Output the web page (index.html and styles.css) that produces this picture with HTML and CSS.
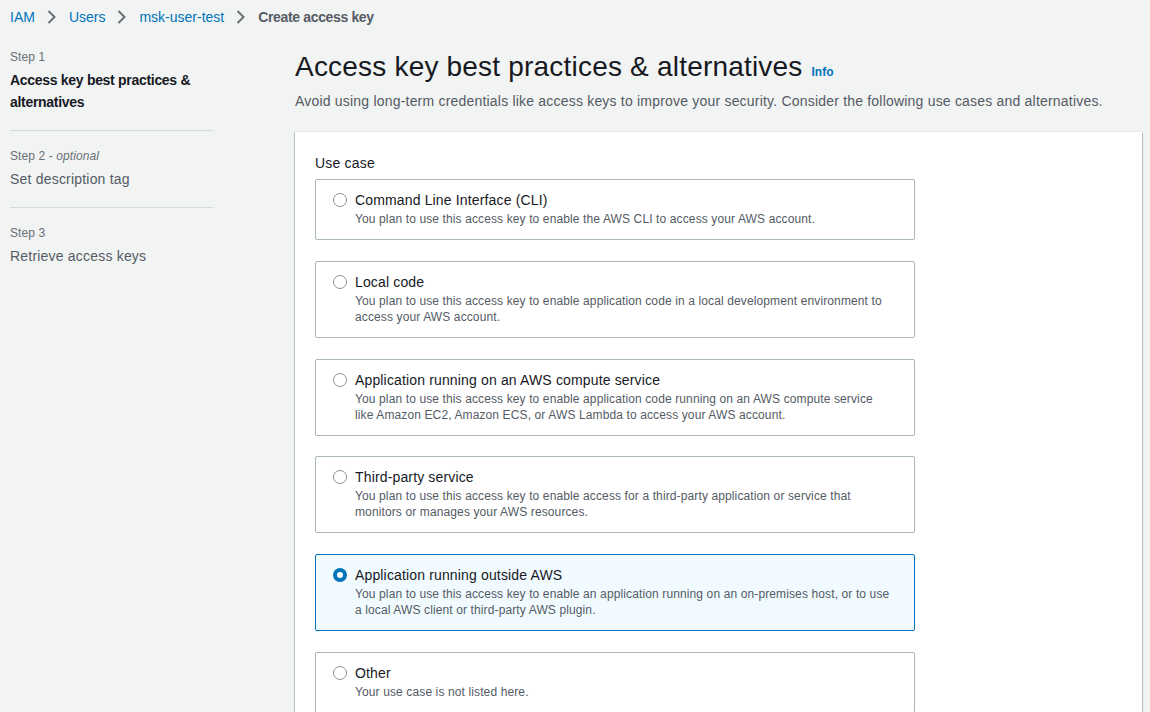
FILE: index.html
```html
<!DOCTYPE html>
<html lang="en">
<head>
<meta charset="utf-8">
<title>Create access key</title>
<link rel="stylesheet" href="styles.css">
</head>
<body>
<nav class="breadcrumbs">
  <a class="crumb-link" href="#">IAM</a>
  <svg class="crumb-sep" viewBox="0 0 16 16" width="16" height="16"><path d="M5.5 2l6 6-6 6" fill="none" stroke="#687078" stroke-width="2"/></svg>
  <a class="crumb-link" href="#">Users</a>
  <svg class="crumb-sep" viewBox="0 0 16 16" width="16" height="16"><path d="M5.5 2l6 6-6 6" fill="none" stroke="#687078" stroke-width="2"/></svg>
  <a class="crumb-link" href="#">msk-user-test</a>
  <svg class="crumb-sep" viewBox="0 0 16 16" width="16" height="16"><path d="M5.5 2l6 6-6 6" fill="none" stroke="#687078" stroke-width="2"/></svg>
  <span class="crumb-current">Create access key</span>
</nav>

<div class="layout">
  <aside class="steps">
    <div class="step">
      <div class="step-label">Step 1</div>
      <div class="step-title step-title-active">Access key best practices &amp; alternatives</div>
    </div>
    <div class="step">
      <div class="step-label">Step 2 - <em>optional</em></div>
      <div class="step-title">Set description tag</div>
    </div>
    <div class="step step-last">
      <div class="step-label">Step 3</div>
      <div class="step-title">Retrieve access keys</div>
    </div>
  </aside>

  <main class="main">
    <h1 class="page-title">Access key best practices &amp; alternatives <a class="info-link" href="#">Info</a></h1>
    <p class="page-desc">Avoid using long-term credentials like access keys to improve your security. Consider the following use cases and alternatives.</p>

    <section class="card">
      <div class="field-label">Use case</div>
      <div class="tiles">
        <label class="tile">
          <span class="radio"></span>
          <span class="tile-text">
            <span class="tile-title">Command Line Interface (CLI)</span>
            <span class="tile-desc">You plan to use this access key to enable the AWS CLI to access your AWS account.</span>
          </span>
        </label>
        <label class="tile">
          <span class="radio"></span>
          <span class="tile-text">
            <span class="tile-title">Local code</span>
            <span class="tile-desc">You plan to use this access key to enable application code in a local development environment to access your AWS account.</span>
          </span>
        </label>
        <label class="tile">
          <span class="radio"></span>
          <span class="tile-text">
            <span class="tile-title">Application running on an AWS compute service</span>
            <span class="tile-desc">You plan to use this access key to enable application code running on an AWS compute service like Amazon EC2, Amazon ECS, or AWS Lambda to access your AWS account.</span>
          </span>
        </label>
        <label class="tile">
          <span class="radio"></span>
          <span class="tile-text">
            <span class="tile-title">Third-party service</span>
            <span class="tile-desc">You plan to use this access key to enable access for a third-party application or service that monitors or manages your AWS resources.</span>
          </span>
        </label>
        <label class="tile tile-selected">
          <span class="radio radio-checked"></span>
          <span class="tile-text">
            <span class="tile-title">Application running outside AWS</span>
            <span class="tile-desc">You plan to use this access key to enable an application running on an on-premises host, or to use a local AWS client or third-party AWS plugin.</span>
          </span>
        </label>
        <label class="tile">
          <span class="radio"></span>
          <span class="tile-text">
            <span class="tile-title">Other</span>
            <span class="tile-desc">Your use case is not listed here.</span>
          </span>
        </label>
      </div>
    </section>
  </main>
</div>
</body>
</html>
```

FILE: styles.css
```css
* {
  box-sizing: border-box;
}

html, body {
  margin: 0;
  padding: 0;
}

body {
  background: #f2f3f3;
  color: #16191f;
  font-family: "Liberation Sans", Arial, sans-serif;
  font-size: 14px;
  line-height: 22px;
  letter-spacing: 0.2px;
}

a {
  text-decoration: none;
}

.breadcrumbs {
  display: flex;
  align-items: center;
  padding: 6px 10px 0;
  height: 28px;
  line-height: 22px;
  letter-spacing: 0;
}

.crumb-link {
  color: #0073bb;
}

.crumb-sep {
  margin: 0 10px 0 8px;
  flex: none;
}

.crumb-current {
  color: #545b64;
  font-weight: bold;
  letter-spacing: -0.35px;
}

.layout {
  display: grid;
  grid-template-columns: 203px 1fr;
  column-gap: 82px;
  padding: 21px 8px 0 10px;
}

.steps {
  display: flex;
  flex-direction: column;
}

.step {
  padding: 0 0 17px;
  border-bottom: 1px solid #d5dbdb;
  margin-bottom: 17px;
}

.step-last {
  border-bottom: none;
}

.step-label {
  font-size: 12px;
  line-height: 16px;
  color: #687078;
  margin-bottom: 4px;
  letter-spacing: 0.1px;
}

.step-label em {
  font-style: italic;
}

.step-title {
  font-size: 14px;
  line-height: 22px;
  color: #545b64;
}

.step-title-active {
  color: #16191f;
  font-weight: bold;
  letter-spacing: -0.3px;
}

.main {
  min-width: 0;
}

.page-title {
  margin: 0;
  font-size: 28px;
  line-height: 36px;
  font-weight: normal;
  color: #16191f;
}

.info-link {
  font-size: 12px;
  line-height: 1;
  font-weight: bold;
  color: #0073bb;
  margin-left: 1px;
  letter-spacing: 0;
}

.page-desc {
  margin: 5px 0 0;
  color: #545b64;
  font-size: 14px;
  line-height: 22px;
}

.card {
  margin-top: 20px;
  background: #fff;
  padding: 20px;
  box-shadow: 0 1px 1px 0 rgba(0, 28, 36, 0.3), 1px 1px 1px 0 rgba(0, 28, 36, 0.15), -1px 1px 1px 0 rgba(0, 28, 36, 0.15), 0 0 0 1px rgba(0, 28, 36, 0.04);
}

.field-label {
  font-size: 14px;
  line-height: 22px;
  color: #16191f;
  margin-bottom: 5px;
}

.tiles {
  display: flex;
  flex-direction: column;
  gap: 20.8px;
}

.tile {
  width: 600px;
  display: flex;
  align-items: flex-start;
  border: 1px solid #aab7b8;
  border-radius: 2px;
  background: #fff;
  padding: 9px 22px 12px 17px;
}

.tile-selected {
  background: #f1faff;
  border-color: #0073bb;
}

.radio {
  flex: none;
  width: 14px;
  height: 14px;
  margin-top: 4px;
  border-radius: 50%;
  border: 1.5px solid #879596;
  background: #fff;
}

.radio-checked {
  border: 4px solid #0073bb;
}

.tile-text {
  display: flex;
  flex-direction: column;
  margin-left: 8px;
}

.tile-title {
  font-size: 14px;
  line-height: 22px;
  color: #16191f;
  letter-spacing: 0.15px;
}

.tile-desc {
  font-size: 12px;
  line-height: 16px;
  color: #545b64;
  letter-spacing: 0.12px;
}
```
